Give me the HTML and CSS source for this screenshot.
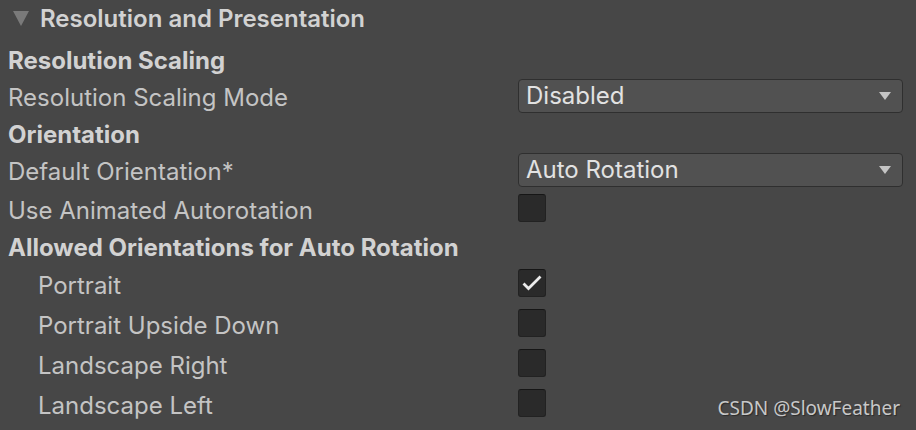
FILE: index.html
```html
<!DOCTYPE html>
<html>
<head>
<meta charset="utf-8">
<link rel="stylesheet" href="styles.css">
</head>
<body>
<div class="panel">
  <div class="title">
    <span class="foldout"></span>
    <span>Resolution and Presentation</span>
  </div>
  <div class="row header h-first">Resolution Scaling</div>
  <div class="row popup-row">
    <span class="label">Resolution Scaling Mode</span>
    <div class="popup"><span>Disabled</span><span class="arrow"></span></div>
  </div>
  <div class="row header">Orientation</div>
  <div class="row popup-row">
    <span class="label">Default Orientation*</span>
    <div class="popup"><span>Auto Rotation</span><span class="arrow"></span></div>
  </div>
  <div class="row check-row">
    <span class="label">Use Animated Autorotation</span>
    <span class="checkbox"></span>
  </div>
  <div class="row header h-tight">Allowed Orientations for Auto Rotation</div>
  <div class="row check-row">
    <span class="label indent">Portrait</span>
    <span class="checkbox">
      <svg width="28" height="28" viewBox="0 0 28 28"><path d="M6.5 15.5 L10.5 19.5 L21.5 8.5" fill="none" stroke="#ececec" stroke-width="2.8" stroke-linecap="square"/></svg>
    </span>
  </div>
  <div class="row check-row">
    <span class="label indent">Portrait Upside Down</span>
    <span class="checkbox"></span>
  </div>
  <div class="row check-row">
    <span class="label indent">Landscape Right</span>
    <span class="checkbox"></span>
  </div>
  <div class="row check-row">
    <span class="label indent">Landscape Left</span>
    <span class="checkbox"></span>
  </div>
</div>
<div class="watermark">CSDN @SlowFeather</div>
</body>
</html>
```
FILE: styles.css
```css
html, body {
  margin: 0;
  padding: 0;
  background: #474747;
  width: 916px;
  height: 430px;
  overflow: hidden;
}
body {
  font-family: Inter, "Noto Sans", sans-serif;
  font-size: 24px;
  color: #c4c4c4;
  position: relative;
}
.panel {
  display: flex;
  flex-direction: column;
}
.title {
  height: 36px;
  display: flex;
  align-items: center;
  padding-left: 13px;
  gap: 11px;
  font-weight: 600;
  color: #d2d2d2;
}
.foldout {
  width: 0;
  height: 0;
  border-left: 8px solid transparent;
  border-right: 8px solid transparent;
  border-top: 15px solid #7a7a7a;
}
.row {
  display: flex;
  align-items: center;
  padding-left: 8px;
  padding-right: 13px;
}
.header {
  height: 37px;
  padding-top: 4px;
  box-sizing: border-box;
  font-weight: 700;
  color: #d2d2d2;
}
.h-first {
  margin-top: 4px;
}
.h-tight {
  height: 35px;
}
.popup-row {
  height: 37px;
}
.check-row {
  height: 40px;
}
.label {
  width: 510px;
  flex: none;
  padding-top: 4px;
  box-sizing: border-box;
}
.label.indent {
  padding-left: 30px;
}
.popup {
  flex: 1;
  height: 34px;
  box-sizing: border-box;
  background: #515151;
  border: 1px solid #2f2f2f;
  border-radius: 4px;
  display: flex;
  align-items: center;
  justify-content: space-between;
  padding: 0 11px 0 7px;
  color: #e2e2e2;
}
.arrow {
  width: 0;
  height: 0;
  border-left: 6px solid transparent;
  border-right: 6px solid transparent;
  border-top: 8px solid #c4c4c4;
}
.checkbox {
  width: 28px;
  height: 28px;
  box-sizing: border-box;
  background: #2a2a2a;
  border: 1px solid #222222;
  border-top-color: #161616;
  border-radius: 3px;
  position: relative;
}
.checkbox svg {
  position: absolute;
  left: -1px;
  top: -1px;
}
.watermark {
  position: absolute;
  right: 16px;
  bottom: 9px;
  font-family: "Noto Sans", sans-serif;
  font-size: 19px;
  color: #c8c8c8;
  text-shadow: 1px 1px 1px #2a2a2a;
}
```
